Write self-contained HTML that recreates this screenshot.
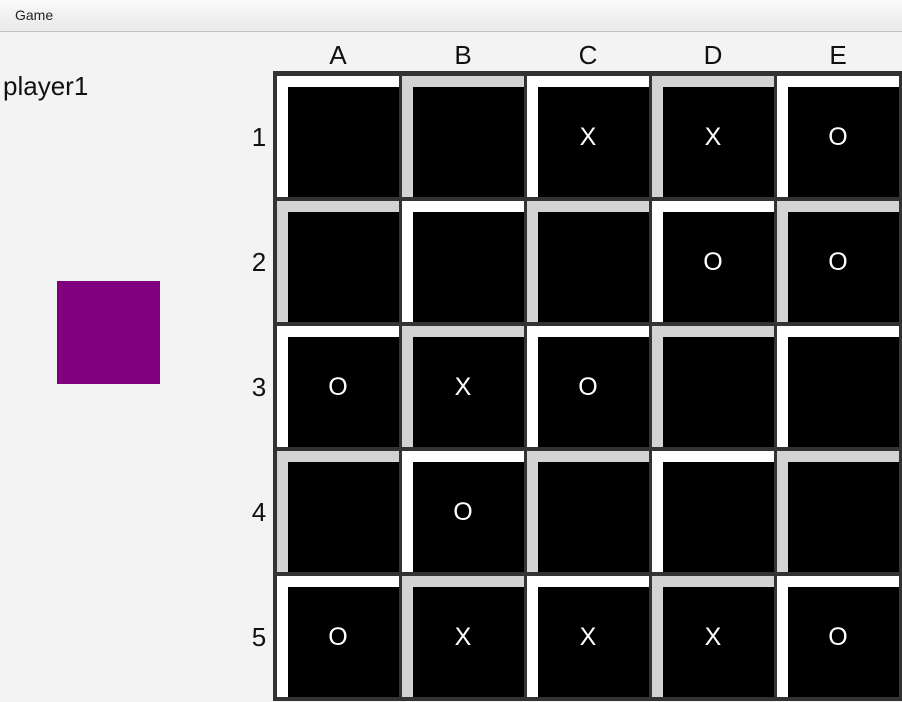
<!DOCTYPE html>
<html><head><style>
body{margin:0;width:902px;height:702px;background:#f3f3f3;position:relative;overflow:hidden;font-family:"Liberation Sans",sans-serif}
.menu{position:absolute;left:0;top:0;width:902px;height:31px;background:linear-gradient(#fafafa,#e9e9e9);border-bottom:1px solid #c2c2c2}
.menu span{position:absolute;left:15px;top:7px;font-size:14px;color:#222}
.p1{position:absolute;left:3px;top:71px;font-size:26px;color:#111}
.sq{position:absolute;left:57px;top:281px;width:103px;height:103px;background:#800080}
.grid{position:absolute;left:273px;top:71px;width:640px;height:630px;background:#333}
.c{position:absolute;width:122px;height:121px;box-sizing:border-box;border-left:11px solid #fff;border-top:11px solid #fff;background:#000;color:#fff;font-size:25px;font-weight:300}
.c.g{border-color:#d3d3d3}
.c span{position:absolute;left:-11px;top:-10px;width:122px;height:121px;line-height:121px;text-align:center}
.lab{position:absolute;font-size:26px;color:#111;text-align:center;width:40px}
</style></head><body>
<div class="menu"><span>Game</span></div>
<div class="p1">player1</div>
<div class="sq"></div>
<div id="labs"></div>
<div class="grid" id="g"></div>
<script>
var b=["  XXO","   OO","OXO  "," O   ","OXXXO"];
var g=document.getElementById('g'),h='';
for(var r=0;r<5;r++)for(var c=0;c<5;c++){
var ch=b[r][c]==' '?'':b[r][c];
h+='<div class="c'+((r+c)%2?' g':'')+'" style="left:'+(4+c*125)+'px;top:'+(5+r*125)+'px"><span>'+ch+'</span></div>';}
g.innerHTML=h;
var l='';
for(var i=0;i<5;i++){l+='<div class="lab" style="left:'+(318+i*125)+'px;top:40px">'+'ABCDE'[i]+'</div>';
l+='<div class="lab" style="left:239px;top:'+(122+i*125)+'px">'+(i+1)+'</div>';}
document.getElementById('labs').innerHTML=l;
</script>
</body></html>
